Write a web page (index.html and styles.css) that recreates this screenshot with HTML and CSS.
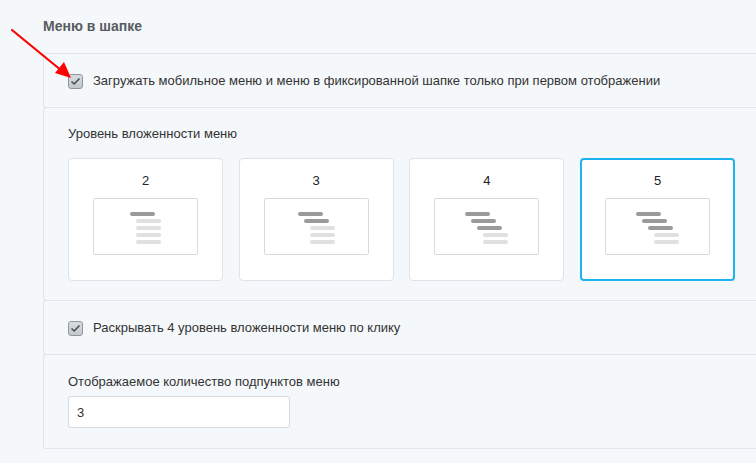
FILE: index.html
```html
<!DOCTYPE html>
<html lang="ru">
<head>
    <meta charset="UTF-8">
    <meta name="viewport" content="width=device-width, initial-scale=1.0">
    <title>Меню в шапке</title>
    <link rel="stylesheet" href="styles.css">
</head>
<body>
    <div class="settings">
        <h2 class="settings-title">Меню в шапке</h2>

        <div class="settings-group">
            <div class="settings-row">
                <label class="check-field">
                    <span class="check-box">
                        <svg width="11" height="9" viewBox="0 0 11 9"><path d="M1.5 4.5 L4.2 7 L9.5 1.5" fill="none" stroke="#4a4f55" stroke-width="1.6"/></svg>
                    </span>
                    <span class="check-text">Загружать мобильное меню и меню в фиксированной шапке только при первом отображении</span>
                </label>
            </div>

            <div class="settings-row settings-row--levels">
                <div class="field-label">Уровень вложенности меню</div>
                <div class="level-list">
                    <div class="level-card">
                        <div class="level-num">2</div>
                        <div class="level-preview">
                            <div class="tree">
                                <span class="bar bar--dark" style="margin-left:0"></span>
                                <span class="bar" style="margin-left:6px"></span>
                                <span class="bar" style="margin-left:6px"></span>
                                <span class="bar" style="margin-left:6px"></span>
                                <span class="bar" style="margin-left:6px"></span>
                            </div>
                        </div>
                    </div>
                    <div class="level-card">
                        <div class="level-num">3</div>
                        <div class="level-preview">
                            <div class="tree">
                                <span class="bar bar--dark" style="margin-left:0"></span>
                                <span class="bar bar--dark" style="margin-left:6px"></span>
                                <span class="bar" style="margin-left:12px"></span>
                                <span class="bar" style="margin-left:12px"></span>
                                <span class="bar" style="margin-left:12px"></span>
                            </div>
                        </div>
                    </div>
                    <div class="level-card">
                        <div class="level-num">4</div>
                        <div class="level-preview">
                            <div class="tree">
                                <span class="bar bar--dark" style="margin-left:0"></span>
                                <span class="bar bar--dark" style="margin-left:6px"></span>
                                <span class="bar bar--dark" style="margin-left:12px"></span>
                                <span class="bar" style="margin-left:18px"></span>
                                <span class="bar" style="margin-left:18px"></span>
                            </div>
                        </div>
                    </div>
                    <div class="level-card level-card--active">
                        <div class="level-num">5</div>
                        <div class="level-preview">
                            <div class="tree">
                                <span class="bar bar--dark" style="margin-left:0"></span>
                                <span class="bar bar--dark" style="margin-left:6px"></span>
                                <span class="bar bar--dark" style="margin-left:12px"></span>
                                <span class="bar" style="margin-left:18px"></span>
                                <span class="bar" style="margin-left:18px"></span>
                            </div>
                        </div>
                    </div>
                </div>
            </div>

            <div class="settings-row">
                <label class="check-field">
                    <span class="check-box">
                        <svg width="11" height="9" viewBox="0 0 11 9"><path d="M1.5 4.5 L4.2 7 L9.5 1.5" fill="none" stroke="#4a4f55" stroke-width="1.6"/></svg>
                    </span>
                    <span class="check-text">Раскрывать 4 уровень вложенности меню по клику</span>
                </label>
            </div>

            <div class="settings-row settings-row--input">
                <div class="field-label">Отображаемое количество подпунктов меню</div>
                <input type="text" class="text-input" value="3">
            </div>
        </div>
    </div>

    <!-- pointer to the first option -->
    <svg class="hint-arrow" width="80" height="85" viewBox="0 0 80 85">
        <line x1="12" y1="30" x2="62" y2="71" stroke="#ff0000" stroke-width="2.2" stroke-linecap="round"/>
        <polygon points="71,78 55,73 64,62" fill="#ff0000"/>
    </svg>
</body>
</html>
```

FILE: styles.css
```css
/* Page */
body {
    margin: 0;
    background: #f5f8fa;
    font-family: "Liberation Sans", Arial, sans-serif;
    font-size: 13px;
    color: #333;
    position: relative;
}

.settings {
    padding: 18px 0 0 43px;
}

.settings-title {
    margin: 0 0 19px;
    font-size: 14px;
    line-height: 16px;
    font-weight: bold;
    color: #555b61;
}

.settings-row {
    border: 1px solid #dfe5ea;
    border-right: 0;
    border-radius: 3px 0 0 3px;
    margin-top: -1px;
    padding: 19px 24px 18px;
}

.settings-row:first-child {
    margin-top: 0;
}

.settings-row--levels {
    padding: 18px 24px 19px;
}

.settings-row--input {
    padding: 19px 24px 20px;
}

/* Checkbox */
.check-field {
    display: flex;
    align-items: center;
    gap: 10px;
    line-height: 16px;
}

.check-box {
    width: 13px;
    height: 13px;
    border: 1px solid #8e959c;
    border-radius: 3px;
    background: linear-gradient(#d9dde1, #c3c8cd);
    display: flex;
    align-items: center;
    justify-content: center;
    flex-shrink: 0;
}

.check-box svg {
    display: block;
}

/* Labels and inputs */
.field-label {
    line-height: 16px;
}

.settings-row--levels .field-label {
    margin-bottom: 16px;
}

.settings-row--input .field-label {
    margin-bottom: 6px;
}

.text-input {
    display: block;
    box-sizing: border-box;
    width: 222px;
    height: 32px;
    padding: 0 8px;
    border: 1px solid #d3dbe0;
    border-radius: 3px;
    background: #fff;
    font-family: inherit;
    font-size: 13px;
    color: #333;
}

/* Nesting level cards */
.level-list {
    display: grid;
    grid-template-columns: repeat(4, 155px);
    column-gap: 15.7px;
}

.level-card {
    box-sizing: border-box;
    height: 123px;
    padding: 14px 24px 0;
    background: #fff;
    border: 1px solid #dde3e8;
    border-radius: 4px;
}

.level-card--active {
    border: 2px solid #1db3f0;
    padding: 13px 23px 0;
}

.level-num {
    text-align: center;
    line-height: 16px;
    font-size: 13px;
    color: #222;
    margin-bottom: 9px;
}

.level-preview {
    height: 57px;
    box-sizing: border-box;
    border: 1px solid #d9d9d9;
    border-radius: 2px;
    padding-top: 13px;
    display: flex;
    justify-content: center;
}

.tree {
    display: flex;
    flex-direction: column;
    gap: 3px;
}

.bar {
    display: block;
    width: 25px;
    height: 4px;
    border-radius: 2px;
    background: #e0e0e0;
}

.bar--dark {
    background: #9a9a9a;
}

/* Annotation arrow */
.hint-arrow {
    position: absolute;
    left: 0;
    top: 0;
}
```
